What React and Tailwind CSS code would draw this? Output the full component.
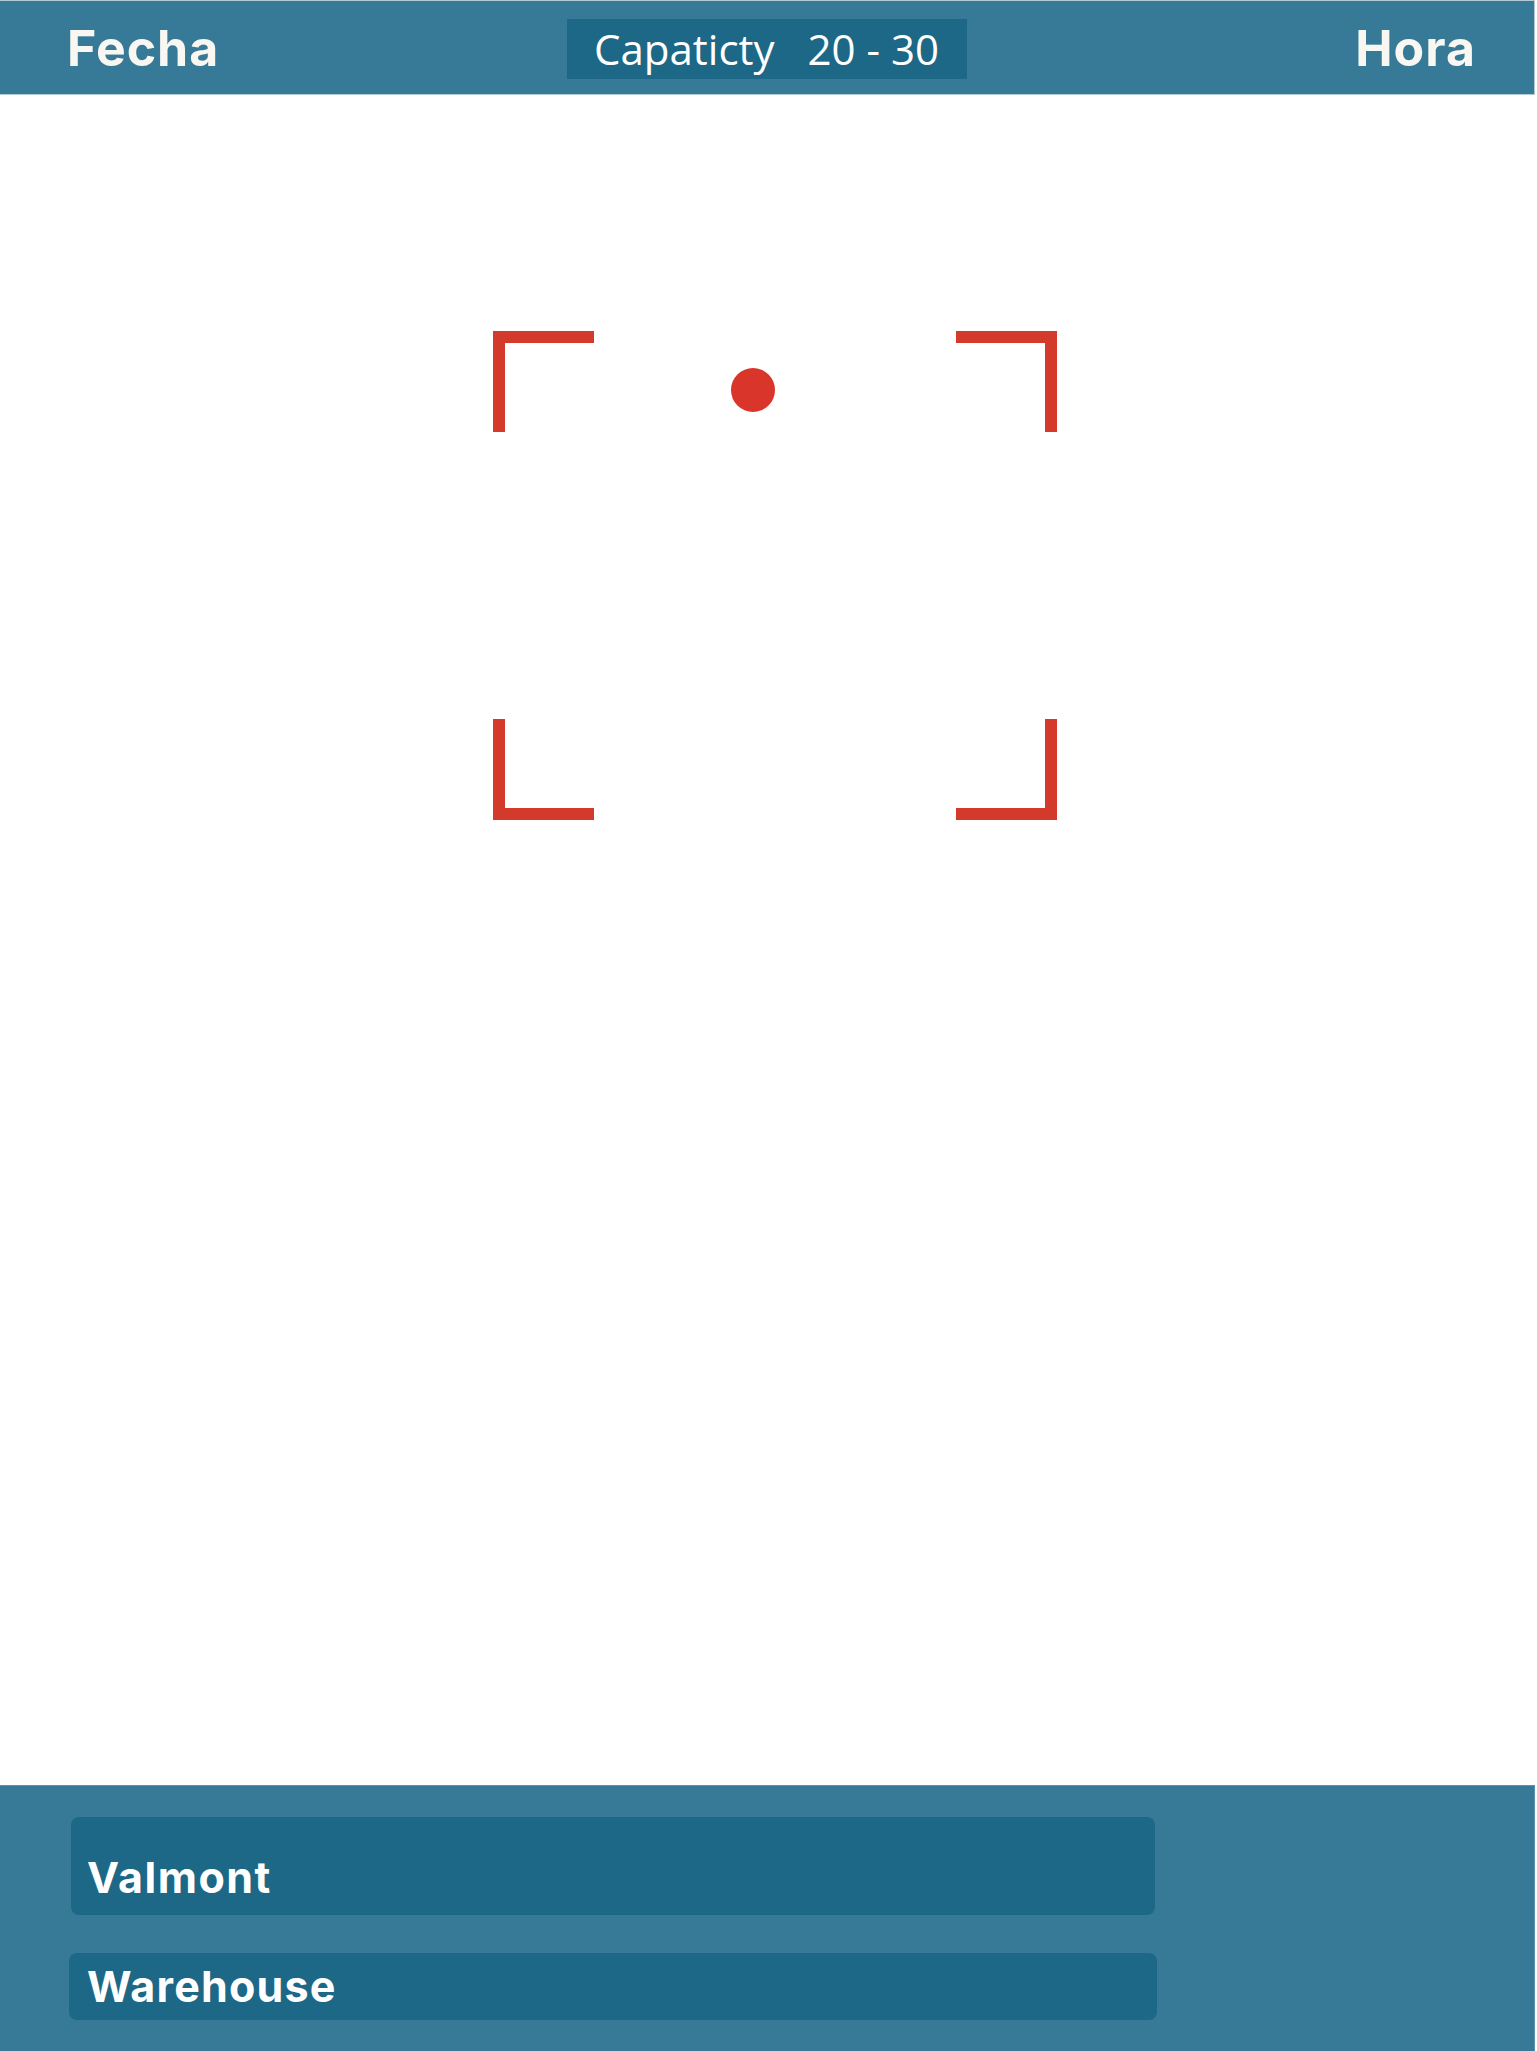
import React from "react";

const bold = { fontFamily: "Inter, 'Liberation Sans', sans-serif" };
const light = { fontFamily: "'Open Sans', 'Liberation Sans', sans-serif" };

function Corner({ className }) {
  return <div className={`w-[101px] h-[101px] border-[#d33a2c] ${className}`} />;
}

export default function App() {
  return (
    <div className="w-[1537px] h-[2051px] bg-white flex flex-col overflow-hidden">
      {/* ============ TOP BAR ============ */}
      <header className="w-[1535px] h-[95px] shrink-0 bg-[#377a97] border-t border-b border-r border-[#b3cad5] grid grid-cols-[1fr_auto_1fr] items-center">
        <div className="pl-[67px]">
          <h1 className="text-[50px] leading-none font-bold text-[#f8f7f2] tracking-[1px]" style={bold}>
            Fecha
          </h1>
        </div>

        <div className="w-[400px] h-[60px] bg-[#1d6887] flex items-center pl-[27px] mt-[3px] text-white text-[42px] leading-none" style={light}>
          <span>Capaticty</span>
          <span className="ml-[33px]">20 - 30</span>
        </div>

        <div className="flex justify-end pr-[58px]">
          <h1 className="text-[50px] leading-none font-bold text-[#f8f7f2] tracking-[1px]" style={bold}>
            Hora
          </h1>
        </div>
      </header>

      {/* ============ VIEWFINDER ============ */}
      <main className="h-[1690px] shrink-0 pt-[236px] pl-[493px]">
        <div className="w-[564px] h-[489px] flex flex-col justify-between">
          <div className="flex items-start">
            <Corner className="border-t-[12px] border-l-[12px]" />
            <div className="ml-[137px] mt-[37px] w-[44px] h-[44px] rounded-full bg-[#d9352a]" />
            <Corner className="ml-auto border-t-[12px] border-r-[12px]" />
          </div>
          <div className="flex justify-between">
            <Corner className="border-b-[12px] border-l-[12px]" />
            <Corner className="border-b-[12px] border-r-[12px]" />
          </div>
        </div>
      </main>

      {/* ============ BOTTOM PANEL ============ */}
      <footer className="w-[1535px] flex-1 bg-[#377a97] border-t border-r border-[#5b92aa] pt-[31px]">
        <div className="ml-[71px] w-[1084px] h-[98px] rounded-[8px] bg-[#1d6887] flex items-end pl-[16px] pb-[16px]">
          <span className="text-[43px] leading-none font-bold text-white tracking-[1.5px]" style={bold}>
            Valmont
          </span>
        </div>
        <div className="ml-[69px] mt-[38px] w-[1088px] h-[67px] rounded-[8px] bg-[#1d6887] flex items-center pl-[18px]">
          <span className="text-[43px] leading-none font-bold text-white tracking-[1.2px]" style={bold}>
            Warehouse
          </span>
        </div>
      </footer>
    </div>
  );
}
